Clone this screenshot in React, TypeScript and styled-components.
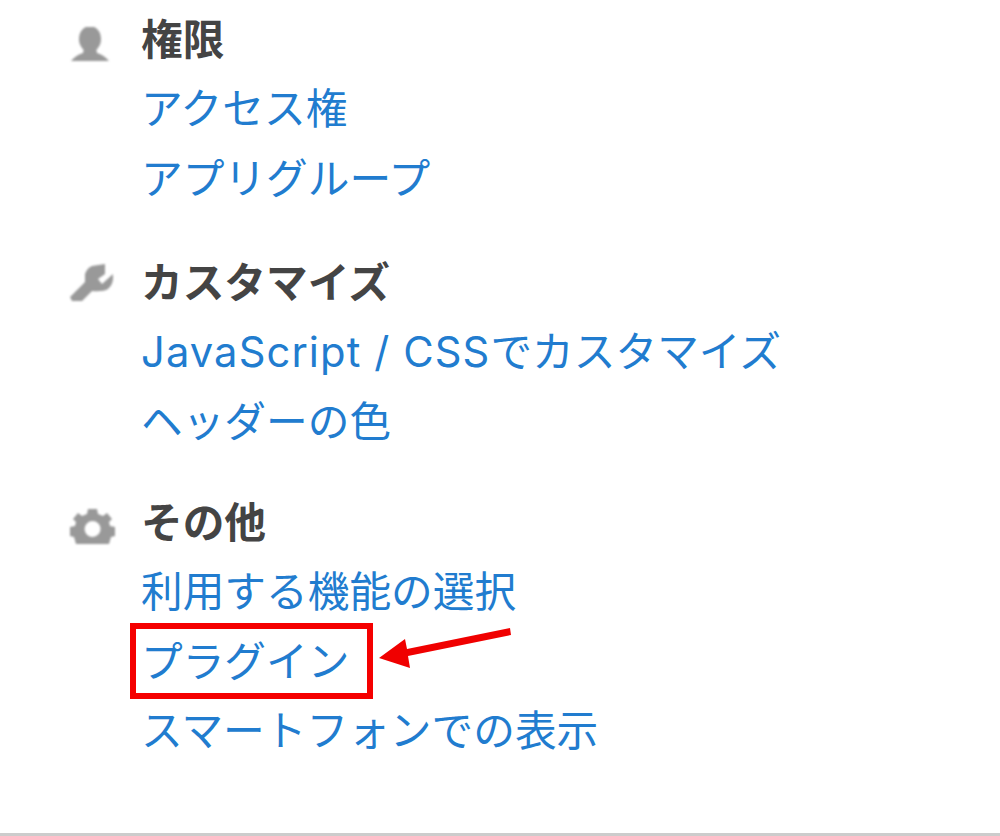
import styled, { createGlobalStyle } from 'styled-components';

const GlobalStyle = createGlobalStyle`
  html, body {
    margin: 0;
    background: #fff;
  }
`;

const PersonIcon = () => (
  <IconSvg width="40" height="36" viewBox="0 0 40 36">
    <ellipse cx="20" cy="12" rx="11" ry="13" />
    <path d="M14 21 L26 21 L27 26 Q34 28 39 34 L1 34 Q6 28 13 26 Z" />
  </IconSvg>
);

const WrenchIcon = () => (
  <IconSvg width="46" height="38" viewBox="0 0 46 38">
    <path d="M0 33 L15 18 L15 10 Q17 4 22 2 L35 0 L35 10 L28 15 L32 20 L43 10 Q44 20 38 25 Q33 28 22 27 L12 37 L2 37 Z" />
  </IconSvg>
);

const GearIcon = () => (
  <IconSvg width="46" height="38" viewBox="0 0 46 38">
    <path
      fillRule="evenodd"
      d="M18 1 L27 1 L28 6 L33 8 L37 5 L42 11 L39 14 L40 18 L45 19 L45 28 L41 29 L39 36 L6 36 L4 29 L0 28 L0 19 L5 18 L6 14 L3 11 L8 5 L12 8 L17 6 Z M22.5 13 A8 8 0 1 0 22.6 29 A8 8 0 1 0 22.5 13 Z"
    />
  </IconSvg>
);

const App = () => {
  return (
    <Page>
      <GlobalStyle />
      <Content>
        <Section>
          <IconCell $top={22}><PersonIcon /></IconCell>
          <Body>
            <Heading>権限</Heading>
            <Item>アクセス権</Item>
            <Item>アプリグループ</Item>
          </Body>
        </Section>

        <Section $gap={35}>
          <IconCell $top={16}><WrenchIcon /></IconCell>
          <Body>
            <Heading>カスタマイズ</Heading>
            <Item><Latin>JavaScript / CSS</Latin>でカスタマイズ</Item>
            <Item>ヘッダーの色</Item>
          </Body>
        </Section>

        <Section $gap={32}>
          <IconCell $top={20}><GearIcon /></IconCell>
          <Body>
            <Heading>その他</Heading>
            <Item>利用する機能の選択</Item>
            <Item>
              プラグイン
              <Highlight />
              <Arrow width="140" height="46" viewBox="0 0 140 46">
                <path d="M0 32 L26 13 L28 23 L131 2 L132 9 L29 30 L31 42 Z" />
              </Arrow>
            </Item>
            <Item>スマートフォンでの表示</Item>
          </Body>
        </Section>
      </Content>
    </Page>
  );
};

export default App;

const Page = styled.div`
  height: 836px;
  box-sizing: border-box;
  border-bottom: 3px solid #ccc;
  overflow: hidden;
  font-family: Inter, "Noto Sans CJK JP", sans-serif;
  font-size: 41.7px;
  line-height: 70px;
`;

const Content = styled.div`
  display: flex;
  flex-direction: column;
  padding: 5px 0 0 70px;
`;

const Section = styled.section<{ $gap?: number }>`
  display: grid;
  grid-template-columns: 71px 1fr;
  margin-top: ${(p) => p.$gap ?? 0}px;
`;

const IconCell = styled.div<{ $top: number }>`
  padding-top: ${(p) => p.$top}px;
`;

const IconSvg = styled.svg`
  display: block;
  fill: #999;
  filter: blur(0.9px);
`;

const Body = styled.div`
  display: flex;
  flex-direction: column;
`;

const Heading = styled.h3`
  margin: 0;
  font-size: 41.7px;
  font-weight: 700;
  line-height: 70px;
  height: 69px;
  color: #444;
`;

const Item = styled.a`
  position: relative;
  display: block;
  color: #217ccf;
  height: 69.5px;
  white-space: nowrap;
`;

const Latin = styled.span`
  letter-spacing: 1.1px;
`;

const Highlight = styled.span`
  position: absolute;
  left: -11px;
  top: -4px;
  width: 243px;
  height: 76px;
  box-sizing: border-box;
  border: 6px solid #f50000;
`;

const Arrow = styled.svg`
  position: absolute;
  left: 238px;
  top: -1px;
  fill: #f00000;
`;
